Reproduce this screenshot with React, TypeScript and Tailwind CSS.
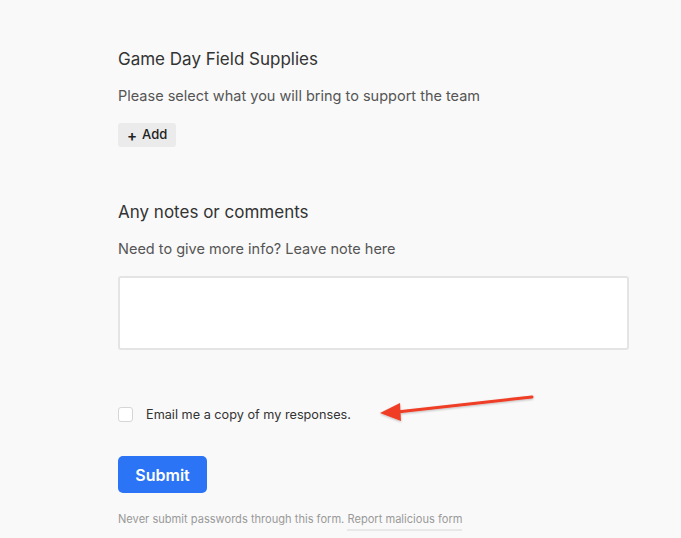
import React, { useState } from 'react';

export default function App() {
  const [emailCopy, setEmailCopy] = useState(false);
  const [notes, setNotes] = useState('');

  return (
    <div
      className="relative min-h-[538px] w-full bg-[#f9f9f9] text-[#333]"
      style={{ fontFamily: 'Inter, "Liberation Sans", sans-serif' }}
    >
      <div className="ml-[118px] w-[511px] pt-[47px]">
        <section>
          <h2 className="text-[17px] leading-[24px] text-[#333]">Game Day Field Supplies</h2>
          <p className="mt-[15px] text-[14.5px] leading-[20px] text-[#555]">
            Please select what you will bring to support the team
          </p>
          <button
            type="button"
            className="mt-[17px] flex h-[24px] items-center gap-[5px] rounded-[3px] bg-[#ebebeb] px-[9px] text-[13px] font-medium text-[#222]"
          >
            <span className="text-[15px] font-semibold leading-none">+</span>
            <span>Add</span>
          </button>
        </section>

        <section className="mt-[53px]">
          <h2 className="text-[17px] leading-[24px] text-[#333]">Any notes or comments</h2>
          <p className="mt-[15px] text-[14.5px] leading-[20px] text-[#555]">
            Need to give more info? Leave note here
          </p>
          <textarea
            value={notes}
            onChange={(e) => setNotes(e.target.value)}
            className="mt-[17px] block h-[74px] w-[511px] resize-none rounded-[3px] border-2 border-[#e4e4e4] bg-white p-2 text-[14px] outline-none"
          />
        </section>

        <label className="mt-[55px] flex cursor-pointer items-center gap-[13px]">
          <input
            type="checkbox"
            checked={emailCopy}
            onChange={(e) => setEmailCopy(e.target.checked)}
            className="h-[15px] w-[15px] appearance-none rounded-[3px] border border-[#d6d6d6] bg-white checked:bg-[#2a74f5]"
          />
          <span className="text-[12.7px] text-[#333]">Email me a copy of my responses.</span>
        </label>

        <button
          type="submit"
          className="mt-[32px] h-[37px] w-[89px] rounded-[5px] bg-[#2a74f5] text-[16px] font-semibold text-white"
        >
          Submit
        </button>

        <p className="mt-[18px] text-[11.1px] text-[#999]">
          Never submit passwords through this form.{' '}
          <span className="border-b-2 border-[#e8e8e8] pb-[3px]">Report malicious form</span>
        </p>
      </div>

      {/* annotation arrow */}
      <svg
        className="pointer-events-none absolute left-[375px] top-[390px]"
        width="165"
        height="38"
        viewBox="0 0 165 38"
      >
        <defs>
          <filter id="arrowShadow" x="-10%" y="-50%" width="120%" height="200%">
            <feDropShadow dx="0" dy="1" stdDeviation="1" floodColor="#000" floodOpacity="0.25" />
          </filter>
        </defs>
        <g filter="url(#arrowShadow)">
          <line x1="157" y1="7" x2="22" y2="22" stroke="#ef3d26" strokeWidth="3" strokeLinecap="round" />
          <polygon points="5,23 25,13 26,31" fill="#ef3d26" />
        </g>
      </svg>
    </div>
  );
}
